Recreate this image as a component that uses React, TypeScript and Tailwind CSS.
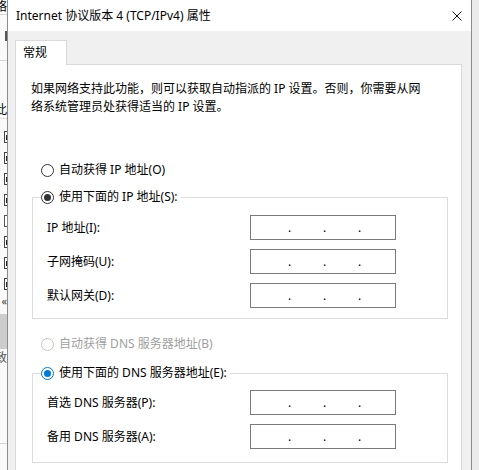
import React from "react";

const ipRows = [
    {id: "ip", label: "IP 地址(I):"},
    {id: "mask", label: "子网掩码(U):"},
    {id: "gateway", label: "默认网关(D):"},
];

const dnsRows = [
    {id: "dns1", label: "首选 DNS 服务器(P):"},
    {id: "dns2", label: "备用 DNS 服务器(A):"},
];

function Radio({checked, blue, disabled}: {checked?: boolean; blue?: boolean; disabled?: boolean}) {
    const ring = disabled ? "border-[#c4c4c4]" : blue ? "border-[#0078d7]" : "border-[#333333]";
    const dot = blue ? "bg-[#0078d7]" : "bg-[#333333]";
    return (
        <span className={`flex h-[13px] w-[13px] shrink-0 items-center justify-center rounded-full border bg-white ${ring}`}>
            {checked && <span className={`h-[7px] w-[7px] rounded-full ${dot}`} />}
        </span>
    );
}

function RadioLabel({text, checked, blue, disabled}: {text: string; checked?: boolean; blue?: boolean; disabled?: boolean}) {
    return (
        <span className="flex h-[18px] items-center gap-[5px] pr-[3px]">
            <Radio checked={checked} blue={blue} disabled={disabled} />
            <span className={disabled ? "text-[#a0a0a0]" : "text-black"}>{text}</span>
        </span>
    );
}

function IpBox() {
    return (
        <div className="flex h-[25px] w-[146px] items-center border border-[#7a7a7a] bg-white pl-[37px]">
            {[0, 1, 2].map((i) => (
                <span key={i} className="w-[35px] leading-[18px]">
                    .
                </span>
            ))}
        </div>
    );
}

function FieldRows({rows}: {rows: {id: string; label: string}[]}) {
    return (
        <div className="flex flex-col gap-[9px] pl-[14px]">
            {rows.map((row) => (
                <div key={row.id} className="flex items-center">
                    <span className="w-[203px]">{row.label}</span>
                    <IpBox />
                </div>
            ))}
        </div>
    );
}

function Checkbox() {
    return (
        <div className="flex h-[12px] items-center pl-[4px]">
            <div className="flex h-[12px] w-[8px] items-center border-y border-l border-[#444] bg-white pl-[1px]">
                <span className="h-[5px] w-[2px] bg-[#222]" />
            </div>
        </div>
    );
}

function LeftStrip() {
    return (
        <div className="flex h-full w-[7px] shrink-0 flex-col overflow-hidden bg-[#fafafa] text-[12px] leading-[14px]">
            <div className="flex h-[14px] justify-end whitespace-nowrap">网络</div>
            <div className="h-px bg-[#d4d4d4]" />
            <div className="flex h-[45px] flex-col items-end pt-[16px]">
                <span className="h-[10px] w-[2px] bg-[#555]" />
            </div>
            <div className="h-px bg-[#d4d4d4]" />
            <div className="flex h-[57px] items-end justify-end whitespace-nowrap pb-[1px]">因此</div>
            <div className="h-px bg-[#e0e0e0]" />
            <div className="flex flex-col gap-[9px] pt-[12px]">
                <Checkbox />
                <Checkbox />
                <Checkbox />
                <Checkbox />
                <div className="flex h-[12px] pl-[4px]">
                    <div className="h-[12px] w-[8px] border-y border-l border-[#555] bg-white" />
                </div>
                <Checkbox />
                <Checkbox />
                <Checkbox />
            </div>
            <div className="flex h-[16px] items-center justify-end pt-[6px] text-[11px] text-[#444]">«</div>
            <div className="mt-[8px] h-[35px] bg-[#cccccc]" />
            <div className="flex h-[18px] items-center justify-end whitespace-nowrap text-[#555]">导致</div>
            <div className="mt-[76px] h-px bg-[#d4d4d4]" />
        </div>
    );
}

export default function App() {
    return (
        <div className="flex h-[470px] w-[479px] overflow-hidden bg-[#ebebeb] font-['Noto_Sans','Noto_Sans_CJK_SC',sans-serif] text-[12px] text-black">
            <LeftStrip />
            <div className="flex h-full w-[465px] shrink-0 flex-col border-x border-[#8c8c8c]">
                <div className="flex h-[31px] shrink-0 items-center justify-between bg-white pl-[8px] pr-[9px]">
                    <span className="leading-[18px]">Internet 协议版本 4 (TCP/IPv4) 属性</span>
                    <svg width="10" height="10" viewBox="0 0 10 10">
                        <path d="M0.5 0.5 L9.5 9.5 M9.5 0.5 L0.5 9.5" stroke="#111" strokeWidth="1" fill="none" />
                    </svg>
                </div>
                <div className="flex flex-1 flex-col bg-[#f0f0f0] pl-[7px] pt-[9px]">
                    <div className="relative z-10 -mb-px flex h-[25px] w-[52px] items-start border-x border-t border-[#d9d9d9] bg-white pl-[7px] pt-[3px] leading-[18px]">
                        常规
                    </div>
                    <div className="flex w-[447px] flex-1 flex-col border-x border-t border-[#d9d9d9] bg-white leading-[18px]">
                        <p className="ml-[15px] mt-[15px] whitespace-nowrap">
                            如果网络支持此功能，则可以获取自动指派的 IP 设置。否则，你需要从网
                            <br />
                            络系统管理员处获得适当的 IP 设置。
                        </p>

                        <div className="ml-[25px] mt-[45px] flex">
                            <RadioLabel text="自动获得 IP 地址(O)" />
                        </div>

                        <fieldset className="ml-[16px] mt-[9px] w-[416px] border border-[#dcdcdc] pb-[10px]">
                            <legend className="ml-[8px]">
                                <RadioLabel text="使用下面的 IP 地址(S):" checked />
                            </legend>
                            <div className="pt-[9px]">
                                <FieldRows rows={ipRows} />
                            </div>
                        </fieldset>

                        <div className="ml-[25px] mt-[16px] flex">
                            <RadioLabel text="自动获得 DNS 服务器地址(B)" disabled />
                        </div>

                        <fieldset className="ml-[16px] mt-[11px] w-[416px] border border-[#dcdcdc] pb-[13px]">
                            <legend className="ml-[8px]">
                                <RadioLabel text="使用下面的 DNS 服务器地址(E):" checked blue />
                            </legend>
                            <div className="pt-[8px]">
                                <FieldRows rows={dnsRows} />
                            </div>
                        </fieldset>
                    </div>
                </div>
            </div>
        </div>
    );
}
